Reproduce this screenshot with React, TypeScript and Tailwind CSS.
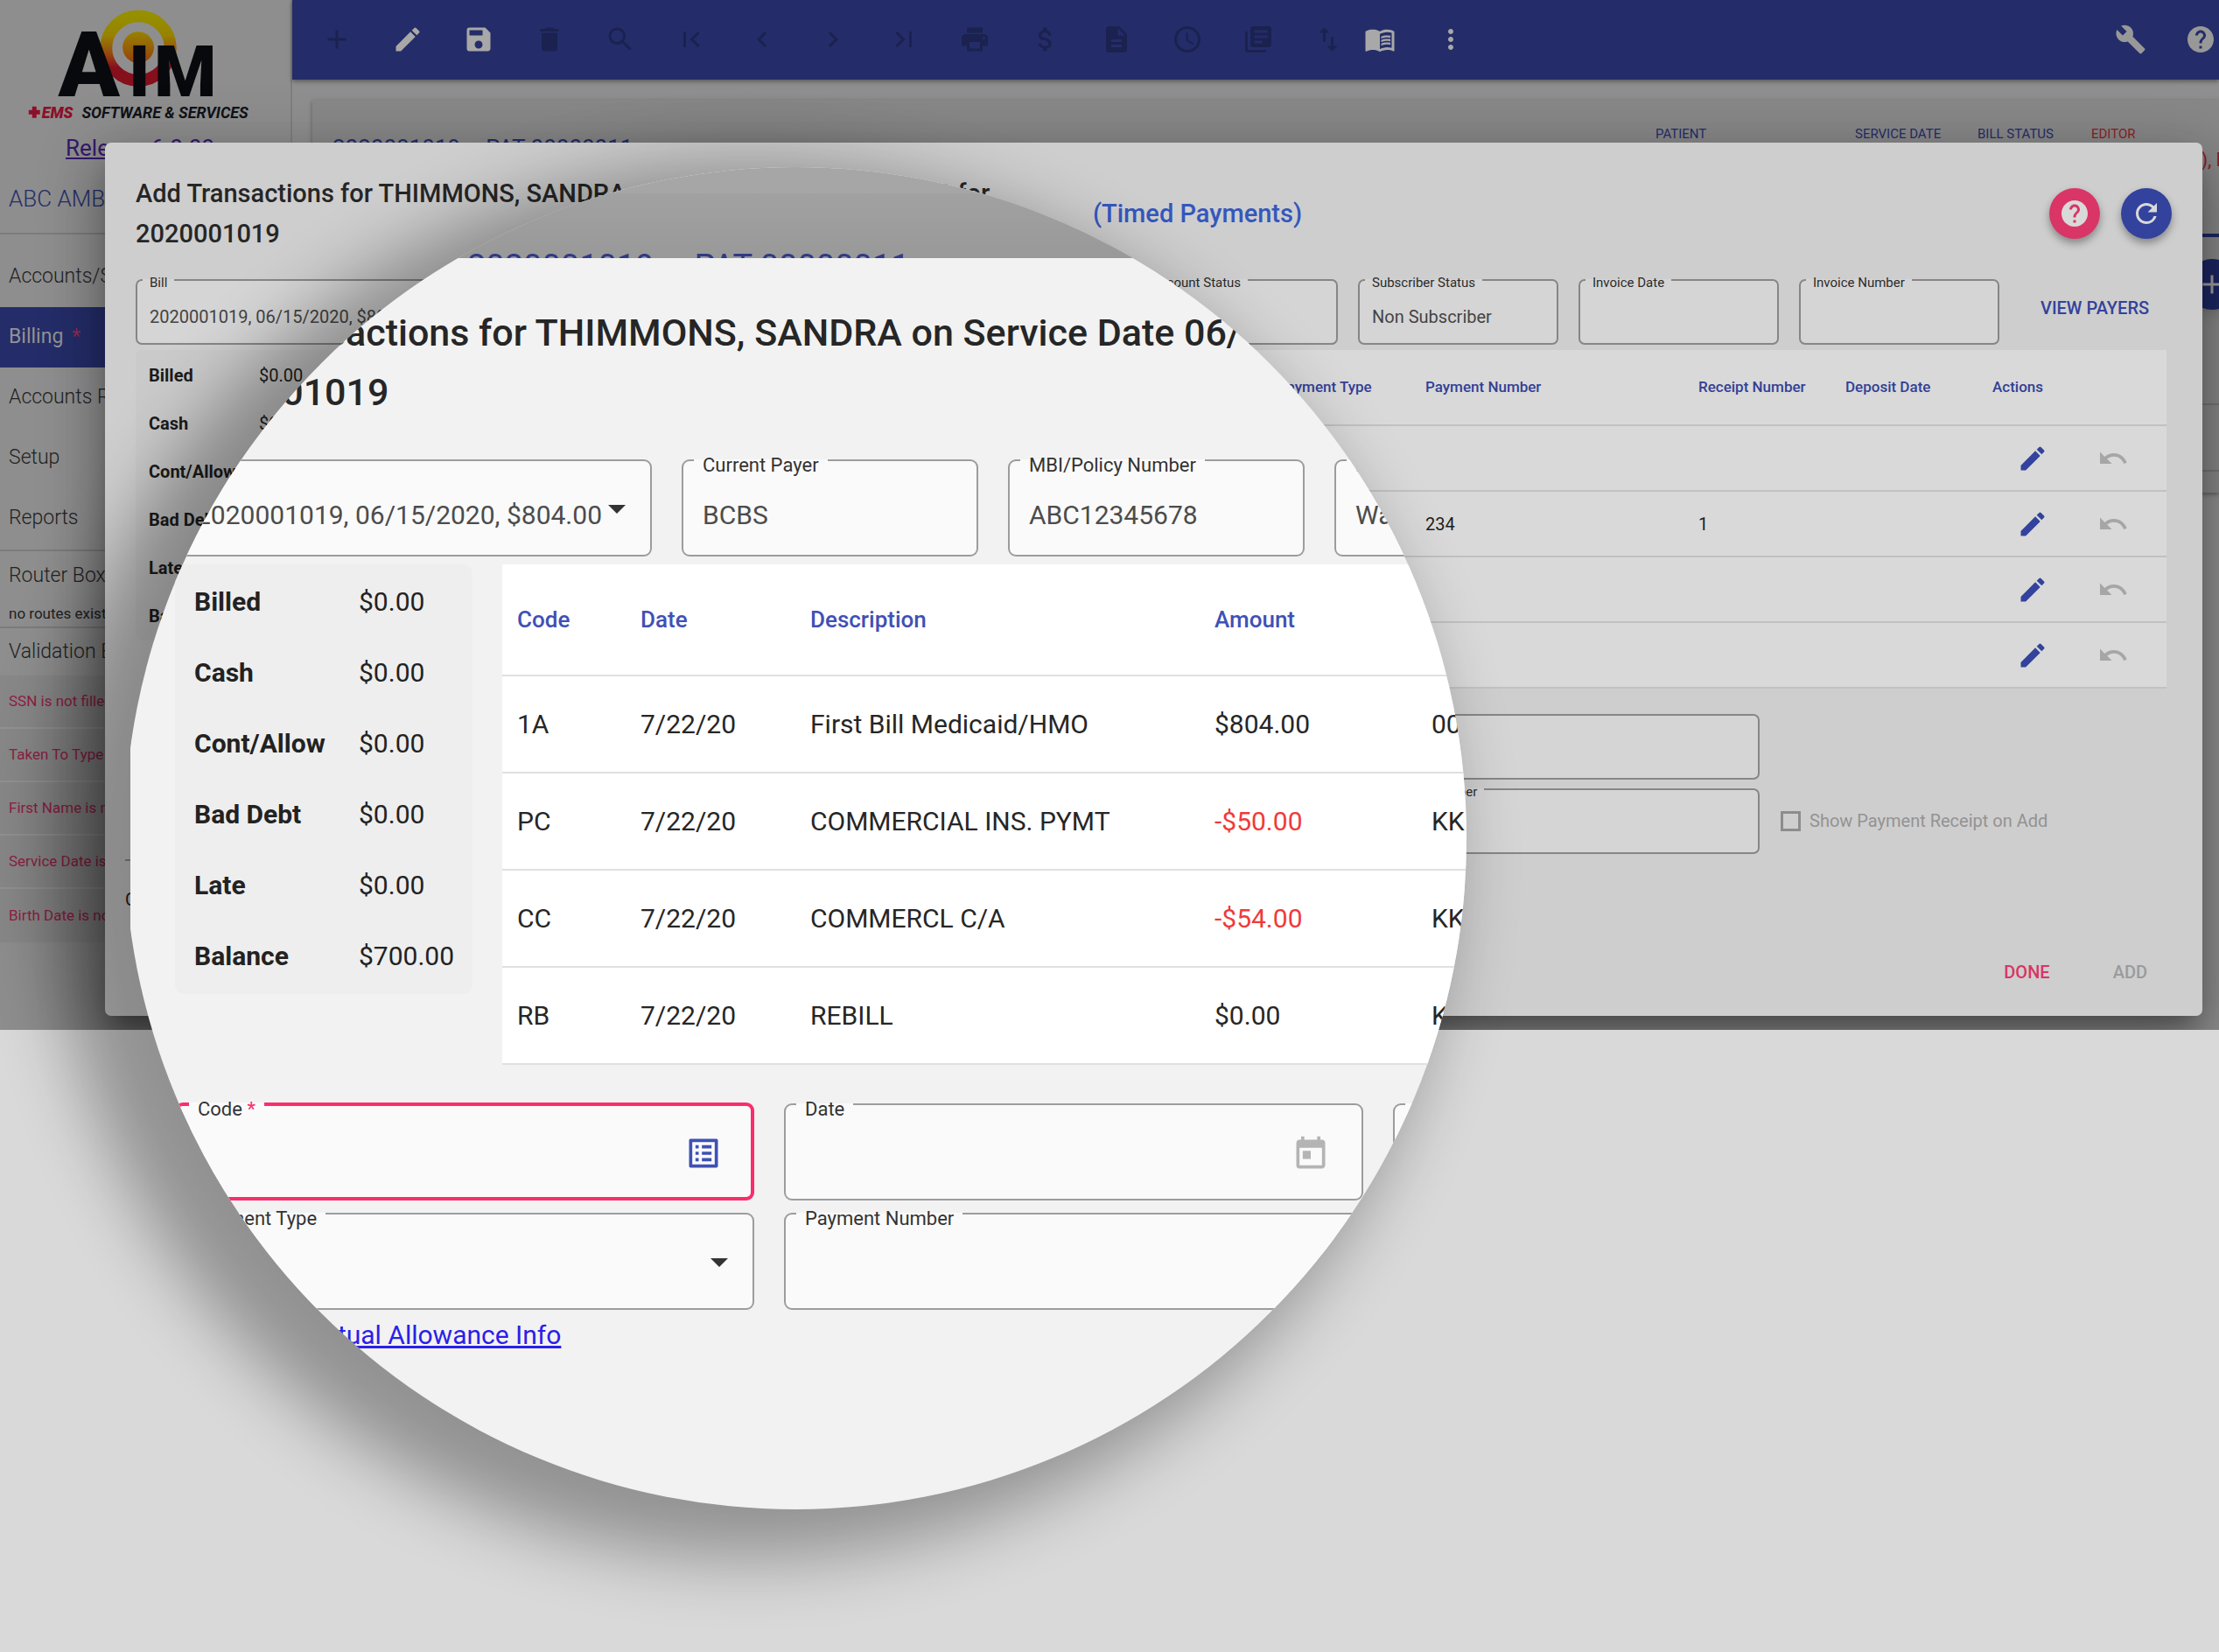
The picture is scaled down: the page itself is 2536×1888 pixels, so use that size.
import React, { useId } from 'react';
import {
  MdAccessTime,
  MdAdd,
  MdAttachMoney,
  MdBuild,
  MdChevronLeft,
  MdChevronRight,
  MdDelete,
  MdDescription,
  MdEdit,
  MdFirstPage,
  MdHelp,
  MdLastPage,
  MdLibraryBooks,
  MdListAlt,
  MdMenuBook,
  MdMoreVert,
  MdPrint,
  MdRefresh,
  MdSave,
  MdSearch,
  MdSwapVert,
  MdToday,
  MdUndo,
} from 'react-icons/md';

const summary = [
  { label: 'Billed', value: '$0.00' },
  { label: 'Cash', value: '$0.00' },
  { label: 'Cont/Allow', value: '$0.00' },
  { label: 'Bad Debt', value: '$0.00' },
  { label: 'Late', value: '$0.00' },
  { label: 'Balance', value: '$700.00' },
];

const transactions = [
  { code: '1A', date: '7/22/20', description: 'First Bill Medicaid/HMO', amount: '$804.00', user: '00', number: '', receipt: '' },
  { code: 'PC', date: '7/22/20', description: 'COMMERCIAL INS. PYMT', amount: '-$50.00', user: 'KK', number: '234', receipt: '1' },
  { code: 'CC', date: '7/22/20', description: 'COMMERCL C/A', amount: '-$54.00', user: 'KK', number: '', receipt: '' },
  { code: 'RB', date: '7/22/20', description: 'REBILL', amount: '$0.00', user: 'KK', number: '', receipt: '' },
];

const toolbarIcons = [
  { label: 'Add', icon: MdAdd, on: false },
  { label: 'Edit', icon: MdEdit, on: true },
  { label: 'Save', icon: MdSave, on: true },
  { label: 'Delete', icon: MdDelete, on: false },
  { label: 'Search', icon: MdSearch, on: false },
  { label: 'First', icon: MdFirstPage, on: false },
  { label: 'Previous', icon: MdChevronLeft, on: false },
  { label: 'Next', icon: MdChevronRight, on: false },
  { label: 'Last', icon: MdLastPage, on: false },
  { label: 'Print', icon: MdPrint, on: false },
  { label: 'Payments', icon: MdAttachMoney, on: false },
  { label: 'Document', icon: MdDescription, on: false },
  { label: 'History', icon: MdAccessTime, on: false },
  { label: 'Library', icon: MdLibraryBooks, on: false },
];

const errors = [
  'SSN is not filled in',
  'Taken To Type is not set',
  'First Name is not filled in',
  'Service Date is not set',
  'Birth Date is not set',
];

const Caret = ({ className }: { className: string }) => (
  <svg viewBox="0 0 10 5" className={className} aria-hidden="true">
    <path d="M0 0h10L5 5z" fill="currentColor" />
  </svg>
);

interface FieldProps {
  label: string;
  value?: string;
  select?: boolean;
  required?: boolean;
  big?: boolean;
  className?: string;
  icon?: React.ReactNode;
}

const Field: React.FC<FieldProps> = ({ label, value = '', select, required, big, className = '', icon }) => {
  const id = useId();
  const frame = big
    ? `h-[125px] rounded-[9px] bg-[#fafafa] ${required ? 'border-4 border-[#fb2c6c]' : 'border-2 border-[#9c9c9c]'}`
    : 'h-[84px] rounded-[7px] bg-[#d5d5d5] border-2 border-[#868686]';
  const text = big ? 'text-[30px] text-[#4c4c4c] pl-[22px] pt-[14px]' : 'text-[20px] text-[#444444] pl-[14px] pt-[10px]';

  return (
    <fieldset className={`min-w-0 ${frame} ${className}`}>
      <legend
        className={
          big
            ? 'ml-3 px-[10px] pt-3 text-[22px] leading-[18px] text-[#333333]'
            : 'ml-[6px] px-2 pt-[6px] text-[15px] leading-[14px] text-[#2b2b2b]'
        }
      >
        <label htmlFor={id}>
          {label}
          {required && <span className="text-[#fb2c6c]"> *</span>}
        </label>
      </legend>
      <div className={`flex h-full items-center ${big ? 'pb-3 pr-7' : 'pb-2 pr-4'}`}>
        {select ? (
          <select id={id} defaultValue={value} className={`w-full min-w-0 appearance-none bg-transparent outline-none ${text}`}>
            <option>{value}</option>
          </select>
        ) : (
          <input id={id} defaultValue={value} className={`w-full min-w-0 bg-transparent outline-none ${text}`} />
        )}
        {select && <Caret className={big ? 'h-[10px] w-5 shrink-0 text-[#333333]' : 'h-[7px] w-[14px] shrink-0 text-[#333333]'} />}
        {icon}
      </div>
    </fieldset>
  );
};

const Summary = ({ big }: { big?: boolean }) => (
  <dl
    className={
      big
        ? 'w-[340px] shrink-0 self-start rounded-[10px] bg-[#eeeeee] pt-[2px] pb-[3px] pl-[22px] text-[30px] text-[#222222]'
        : 'w-[229px] shrink-0 self-start rounded-[7px] bg-[#cacaca] pt-px pb-px pl-[15px] text-[20px] text-[#1c1c1c]'
    }
  >
    {summary.map((row) => (
      <div key={row.label} className={big ? 'flex h-[81px] items-center' : 'flex h-[55px] items-center'}>
        <dt className={big ? 'w-[188px] font-bold' : 'w-[126px] font-bold'}>{row.label}</dt>
        <dd>{row.value}</dd>
      </div>
    ))}
  </dl>
);

const amountColor = (amount: string) => (amount.startsWith('-') ? 'text-[#f03a3a]' : '');

const TransactionTable = () => (
  <table className="w-full table-fixed bg-[#d9d9d9] text-left text-[20px] text-[#1e1e1e]">
    <colgroup>
      <col className="w-[107px]" />
      <col className="w-[131px]" />
      <col className="w-[312px]" />
      <col className="w-[168px]" />
      <col className="w-[335px]" />
      <col className="w-[169px]" />
      <col className="w-[312px]" />
      <col className="w-[168px]" />
      <col className="w-[168px]" />
      <col />
    </colgroup>
    <thead className="text-[17px] text-[#333f95]">
      <tr className="h-[86px] border-b-2 border-[#c1c1c1]">
        {['Code', 'Date', 'Description', 'Amount', 'User', 'Payment Type', 'Payment Number', 'Receipt Number', 'Deposit Date', 'Actions'].map(
          (heading) => (
            <th key={heading} className="whitespace-nowrap font-medium first:pl-3">
              {heading}
            </th>
          ),
        )}
      </tr>
    </thead>
    <tbody>
      {transactions.map((row) => (
        <tr key={row.code} className="h-[75px] border-b-2 border-[#c1c1c1]">
          <td className="pl-3">{row.code}</td>
          <td>{row.date}</td>
          <td>{row.description}</td>
          <td className={amountColor(row.amount)}>{row.amount}</td>
          <td>{row.user}</td>
          <td />
          <td>{row.number}</td>
          <td>{row.receipt}</td>
          <td />
          <td>
            <div className="flex gap-14 pl-7">
              <button aria-label="Edit transaction" className="text-[#33429c]">
                <MdEdit className="size-9" />
              </button>
              <button aria-label="Undo transaction" className="text-[#a6a6a6]">
                <MdUndo className="size-9" />
              </button>
            </div>
          </td>
        </tr>
      ))}
    </tbody>
  </table>
);

const LensTable = () => (
  <table className="w-full table-fixed bg-white text-left text-[30px] text-[#262626]">
    <colgroup>
      <col className="w-[158px]" />
      <col className="w-[194px]" />
      <col className="w-[462px]" />
      <col className="w-[248px]" />
      <col />
    </colgroup>
    <thead className="text-[26px] text-[#3f51b5]">
      <tr className="h-[127px] border-b-2 border-[#e0e0e0]">
        {['Code', 'Date', 'Description', 'Amount', ''].map((heading) => (
          <th key={heading} className="font-medium first:pl-[17px]">
            {heading}
          </th>
        ))}
      </tr>
    </thead>
    <tbody>
      {transactions.map((row) => (
        <tr key={row.code} className="h-[111px] border-b-2 border-[#e0e0e0]">
          <td className="pl-[17px]">{row.code}</td>
          <td>{row.date}</td>
          <td>{row.description}</td>
          <td className={amountColor(row.amount)}>{row.amount}</td>
          <td>{row.user}</td>
        </tr>
      ))}
    </tbody>
  </table>
);

const Logo = () => (
  <svg viewBox="0 0 334 150" className="h-[150px] w-full" role="img" aria-label="AIM EMS Software & Services">
    <defs>
      <linearGradient id="ring" x1="0" y1="0" x2="0" y2="1">
        <stop offset="0" stopColor="#968f00" />
        <stop offset="0.3" stopColor="#968200" />
        <stop offset="0.6" stopColor="#96450f" />
        <stop offset="0.8" stopColor="#860f1c" />
        <stop offset="1" stopColor="#860f1c" />
      </linearGradient>
      <linearGradient id="dot" x1="0" y1="0" x2="0" y2="1">
        <stop offset="0" stopColor="#968200" />
        <stop offset="1" stopColor="#96400f" />
      </linearGradient>
    </defs>
    <circle cx="159" cy="55" r="37" fill="none" stroke="url(#ring)" strokeWidth="14" />
    <circle cx="159" cy="54" r="18" fill="url(#dot)" />
    <g fill="#08090d" fontFamily="Roboto, sans-serif" fontWeight="900">
      <text x="67" y="110" fontSize="104">A</text>
      <text x="148" y="110" fontSize="82">I</text>
      <text x="177" y="110" fontSize="82">M</text>
    </g>
    <path d="M37 122h5v4h4v5h-4v4h-5v-4h-4v-5h4z" fill="#8c1029" />
    <g fontFamily="Roboto, sans-serif" fontWeight="700" fontStyle="italic" fontSize="18">
      <text x="48" y="135" fontWeight="900" fill="#8c1029">EMS</text>
      <text x="94" y="135" fill="#101218">SOFTWARE &amp; SERVICES</text>
    </g>
  </svg>
);

const NavItem = ({ label, active }: { label: string; active?: boolean }) => (
  <a
    href="#"
    className={`flex h-[69px] items-center pl-[10px] text-[23px] ${
      active ? 'bg-[#242d69] text-[#929292]' : 'font-light text-[#222222]'
    }`}
  >
    {label}
    {active && <span className="pl-[10px] text-[#932a52]">*</span>}
  </a>
);

const Sidebar = () => (
  <aside className="w-[334px] shrink-0 overflow-hidden border-r-2 border-[#7f7f7f] bg-[#8e8e8e] pb-[100px]">
    <Logo />
    <a href="#" className="ml-[75px] block text-[26px] leading-[38px] text-[#33196b] underline">
      Release 6.0.00
    </a>
    <p className="flex h-[80px] items-center border-b-2 border-[#7b7b7b] pl-[10px] text-[26px] font-light whitespace-nowrap text-[#252d69]">
      ABC AMBULANCE
    </p>
    <nav className="border-b-2 border-[#7b7b7b] pt-[14px] pb-px">
      <NavItem label="Accounts/Setup" />
      <NavItem label="Billing" active />
      <NavItem label="Accounts Rec" />
      <NavItem label="Setup" />
      <NavItem label="Reports" />
    </nav>
    <section className="border-b-2 border-[#7b7b7b] pl-[10px]">
      <h2 className="text-[23px] leading-[56px] font-light text-[#222222]">Router Box</h2>
      <p className="text-[17px] leading-[30px] text-[#222222]">no routes exist</p>
    </section>
    <h2 className="pl-[10px] text-[23px] leading-[54px] font-light text-[#222222]">Validation Errors</h2>
    <ul className="bg-[#888888] text-[17px] text-[#8f1f43]">
      {errors.map((error) => (
        <li key={error} className="flex h-[61px] items-center border-b-2 border-[#929292] pl-[10px] whitespace-nowrap last:border-0">
          {error}
        </li>
      ))}
    </ul>
  </aside>
);

const Toolbar = () => (
  <header className="relative flex h-[91px] items-center bg-[#242d69] pb-[2px] pl-[10px] shadow-[0_2px_5px_rgba(0,0,0,0.4)]">
    {toolbarIcons.map(({ label, icon: Icon, on }) => (
      <button key={label} aria-label={label} className={`flex w-[81px] justify-center ${on ? 'text-[#a8a8a8]' : 'text-[#1b2250]'}`}>
        <Icon className="size-9" />
      </button>
    ))}
    <button aria-label="Swap" className="ml-[22px] text-[#1b2250]">
      <MdSwapVert className="size-9" />
    </button>
    <button aria-label="Manual" className="flex w-[81px] justify-center text-[#a8a8a8]">
      <MdMenuBook className="size-9" />
    </button>
    <button aria-label="More" className="flex w-[81px] justify-center text-[#a8a8a8]">
      <MdMoreVert className="size-9" />
    </button>
    <div className="mr-[3px] ml-auto flex gap-11 text-[#989898]">
      <button aria-label="Tools">
        <MdBuild className="size-9" />
      </button>
      <button aria-label="Help">
        <MdHelp className="size-9" />
      </button>
    </div>
  </header>
);

const RunCard = () => (
  <section className="mt-[23px] ml-[23px] bg-[#888888] shadow-[0_2px_5px_rgba(0,0,0,0.35)]">
    <div className="flex h-[157px] border-b-4 border-[#1d2763] pt-[30px] pl-[23px]">
      <h1 className="flex gap-[29px] pt-[7px] text-[26px] leading-[36px] text-[#252d69]">
        <span>2020001019</span>
        <span>PAT 00000011</span>
      </h1>
      <dl className="ml-auto flex text-[15px] leading-[18px] text-[#252d69]">
        <div className="w-[228px]">
          <dt>PATIENT</dt>
        </div>
        <div className="w-[140px]">
          <dt>SERVICE DATE</dt>
        </div>
        <div className="w-[130px]">
          <dt>BILL STATUS</dt>
        </div>
        <div className="w-[146px] text-[#8c1f28]">
          <dt>EDITOR</dt>
          <dd className="-mr-2 pt-[9px] text-right text-[22px] leading-[24px]">), k</dd>
        </div>
      </dl>
    </div>
    <div className="flex h-[192px] justify-end border-b-2 border-[#757575] pt-[25px]">
      <button aria-label="Add run" className="-mr-[21px] flex size-[58px] items-center justify-center rounded-full bg-[#1d2763] text-[#a0a0a0] shadow-lg">
        <MdAdd className="size-9" />
      </button>
    </div>
    <div className="h-[76px] border-b-2 border-[#757575]" />
    <div className="h-6" />
  </section>
);

const TransactionsDialog = () => (
  <section
    role="dialog"
    aria-label="Add Transactions"
    className="absolute top-[163px] right-[19px] left-[120px] rounded-[7px] bg-[#cecece] pt-[35px] pr-[41px] pl-[35px] shadow-[0_17px_24px_-11px_rgba(0,0,0,0.3),0_36px_58px_4px_rgba(0,0,0,0.2),0_14px_70px_12px_rgba(0,0,0,0.18)]"
  >
    <header className="flex items-center">
      <h2 className="w-[1094px] pr-[100px] text-[29px] leading-[46px] font-medium text-[#262626]">
        Add Transactions for THIMMONS, SANDRA on Service Date 06/15/2020 for 2020001019
      </h2>
      <a href="#" className="pt-[2px] text-[29px] font-medium text-[#3457bd]">
        (Timed Payments)
      </a>
      <div className="-mr-[6px] ml-auto flex gap-6">
        <button aria-label="Help" className="flex size-[58px] items-center justify-center rounded-full bg-[#d93567] text-[#d9d9d9] shadow-[0_5px_10px_rgba(0,0,0,0.35)]">
          <MdHelp className="size-9" />
        </button>
        <button aria-label="Refresh" className="flex size-[58px] items-center justify-center rounded-full bg-[#33429c] text-[#d9d9d9] shadow-[0_5px_10px_rgba(0,0,0,0.35)]">
          <MdRefresh className="size-9" />
        </button>
      </div>
    </header>

    <div className="mt-5 flex items-center gap-[23px]">
      <Field label="Bill" value="2020001019, 06/15/2020, $804.00" select className="w-[366px]" />
      <Field label="Current Payer" value="BCBS" className="w-[229px]" />
      <Field label="MBI/Policy Number" value="ABC12345678" className="w-[229px]" />
      <Field label="Payer Status" value="Waiting" className="w-[229px]" />
      <Field label="Account Status" className="w-[229px]" />
      <Field label="Subscriber Status" value="Non Subscriber" className="w-[229px]" />
      <Field label="Invoice Date" className="w-[229px]" />
      <Field label="Invoice Number" className="w-[229px]" />
      <button className="ml-6 text-[20px] font-medium whitespace-nowrap text-[#33429c]">VIEW PAYERS</button>
    </div>

    <div className="mt-[6px] flex gap-[23px]">
      <Summary />
      <TransactionTable />
    </div>

    <div className="mt-5 flex items-end">
      <div className="grid grid-cols-[repeat(4,446px)] gap-x-[24px] gap-y-px">
        <Field label="Code" select />
        <Field label="Date" />
        <Field label="Amount" />
        <Field label="User" />
        <Field label="Payment Type" select />
        <Field label="Payment Number" />
        <Field label="Deposit Date" />
        <Field label="Receipt Number" />
      </div>
      <label className="mb-[22px] ml-6 flex items-center gap-[10px] text-[20px] leading-[32px] text-[#939393]">
        <input type="checkbox" className="size-[23px] appearance-none border-[3px] border-[#8d8d8d]" />
        Show Payment Receipt on Add
      </label>
    </div>

    <div className="mt-[6px] -ml-3 w-1/2 border-t-2 border-[#8f8f8f] pt-7">
      <p className="text-[20px] leading-[32px] text-[#1e1e1e]">Comments</p>
    </div>

    <footer className="flex justify-end gap-[72px] pt-[52px] pr-[22px] pb-[35px] text-[20px] leading-[30px] font-medium">
      <button className="text-[#d93567]">DONE</button>
      <button className="text-[#9b9b9b]" disabled>
        ADD
      </button>
    </footer>
  </section>
);

// Magnified part of the dialog, cut to a circle
const Lens = () => (
  <div className="absolute top-[191px] left-[149px] h-[1534px] w-[1527px]">
    <div className="absolute inset-x-0 top-[7px] h-[1520px] rounded-full bg-black/30 shadow-[-56px_26px_80px_36px_rgba(0,0,0,0.33)]" />
    <div className="relative h-full overflow-hidden bg-[#f2f2f2] [clip-path:circle(767px_at_760px_767px)]">
      <div className="flex h-[104px] flex-col overflow-hidden bg-[#a6a6a6] pt-[30px]">
        <p className="flex h-[74px] shrink-0 gap-[46px] overflow-hidden bg-linear-to-b from-[#a1a1a1] to-[#999999] pt-[58px] pl-[385px] text-[38px] leading-[52px] whitespace-nowrap text-[#303a85]">
          <span>2020001019</span>
          <span>PAT 00000011</span>
        </p>
      </div>
      <div className="w-[1900px] pt-[51px] pl-[51px]">
        <h2 className="text-[43px] leading-[68px] font-medium text-[#262626]">
          Add Transactions for THIMMONS, SANDRA on Service Date 06/15/2020 for
          <br />
          2020001019
        </h2>
        <div className="mt-[29px] flex gap-[34px]">
          <Field big label="Bill" value="2020001019, 06/15/2020, $804.00" select className="w-[545px]" />
          <Field big label="Current Payer" value="BCBS" className="w-[339px]" />
          <Field big label="MBI/Policy Number" value="ABC12345678" className="w-[339px]" />
          <Field big label="Payer Status" value="Waiting" className="w-[339px]" />
        </div>
        <div className="mt-[9px] flex gap-[34px]">
          <Summary big />
          <LensTable />
        </div>
        <div className="mt-[30px] grid grid-cols-[repeat(3,662px)] gap-x-[34px]">
          <Field
            big
            required
            label="Code"
            icon={
              <button aria-label="Pick a code" className="mt-[3px] mr-1 text-[#3f51b5]">
                <MdListAlt className="size-11" />
              </button>
            }
          />
          <Field
            big
            label="Date"
            icon={
              <button aria-label="Pick a date" className="mt-[3px] mr-2 text-[#b4b4b4]">
                <MdToday className="size-11" />
              </button>
            }
          />
          <Field big label="Post Date" />
          <Field big label="Payment Type" select />
          <Field big label="Payment Number" className="col-span-2" />
        </div>
        <a href="#" className="mt-2 ml-[9px] block text-[30px] leading-[42px] text-[#2a20e8] underline">
          View Contractual Allowance Info
        </a>
      </div>
    </div>
  </div>
);

export default function App() {
  return (
    <main className="relative min-h-screen overflow-hidden bg-[#d9d9d9] font-['Roboto',sans-serif]">
      <div className="relative flex overflow-hidden bg-[#8f8f8f]">
        <Sidebar />
        <div className="min-w-0 flex-1">
          <Toolbar />
          <RunCard />
        </div>
        <TransactionsDialog />
      </div>
      <Lens />
    </main>
  );
}
